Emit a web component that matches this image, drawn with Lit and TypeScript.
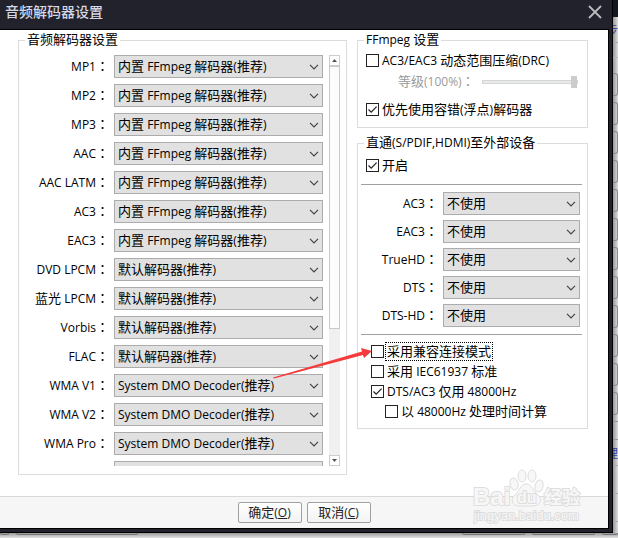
import { LitElement, html, css } from "lit";
import { customElement, property, state } from "lit/decorators.js";

const CJK = /([\u3000-\u9fff\uff00-\uffef]+)/;

/* Han runs are set one size larger than the Latin text beside them. */
const mixed = (text: string) =>
  text.split(CJK).map((part) => (CJK.test(part) ? html`<span class="han">${part}</span>` : part));

const shared = css`
  * { box-sizing: border-box; }
  .han { font-size: 13px; line-height: 0; }
  /* The Traditional face centres the full-width colon in its cell. */
  .colon { font-family: "Noto Sans CJK TC", sans-serif; font-size: 13px; line-height: 0; }
`;

@customElement("option-select")
class OptionSelect extends LitElement {
  @property() value = "";
  @property() name = "";
  @property({ type: Array }) options: string[] = [];

  static styles = [
    shared,
    css`
      :host { display: block; min-width: 0; }
      select, select::picker(select) { appearance: base-select; }
      select {
        display: flex;
        align-items: center;
        width: 100%;
        height: 23px;
        min-height: 0;
        padding: 0 3px;
        border: 1px solid #acacac;
        border-radius: 0;
        background: #e1e1e1;
        color: #000;
        font: inherit;
      }
      select::picker-icon { display: none; }
      select button {
        all: unset;
        display: flex;
        flex: 1;
        align-items: center;
        justify-content: space-between;
        line-height: 21px;
        white-space: pre;
      }
      svg { width: 10px; height: 6px; flex: none; }
    `,
  ];

  render() {
    return html`<select aria-label=${this.name} @change=${(e: Event) => (this.value = (e.target as HTMLSelectElement).value)}>
      <button><span>${mixed(this.value)}</span><svg viewBox="0 0 10 6"><path d="M1 .8 5 4.8 9 .8" fill="none" stroke="#444" stroke-width="1.2"/></svg></button>
      ${this.options.map((o) => html`<option value=${o} ?selected=${o === this.value}>${o}</option>`)}
    </select>`;
  }
}

@customElement("check-box")
class CheckBox extends LitElement {
  @property() text = "";
  @property({ type: Boolean }) checked = false;
  @property({ type: Boolean }) focused = false;

  static styles = [
    shared,
    css`
      :host { display: flex; }
      label { display: flex; align-items: center; gap: 2px; line-height: 17px; white-space: pre; }
      input {
        appearance: none;
        flex: none;
        width: 13px;
        height: 13px;
        margin: 0;
        border: 1px solid #222;
        background: #fff;
      }
      input:checked {
        background: #fff url("data:image/svg+xml,%3Csvg xmlns='http://www.w3.org/2000/svg' viewBox='0 0 11 11'%3E%3Cpath d='M1.5 5.5 4.2 8.2 9.6 2.6' fill='none' stroke='%23222' stroke-width='1.2'/%3E%3C/svg%3E");
      }
      .text { padding: 0 1px; }
      .focused { outline: 1px dotted #000; outline-offset: 0; }
    `,
  ];

  render() {
    return html`<label><input type="checkbox" .checked=${this.checked}><span class="text ${this.focused ? "focused" : ""}">${mixed(this.text)}</span></label>`;
  }
}

const FF = "内置 FFmpeg 解码器(推荐)";
const DEF = "默认解码器(推荐)";
const DMO = "System DMO Decoder(推荐)";

const DECODERS: [string, string][] = [
  ["MP1", FF], ["MP2", FF], ["MP3", FF], ["AAC", FF], ["AAC LATM", FF], ["AC3", FF], ["EAC3", FF],
  ["DVD LPCM", DEF], ["蓝光 LPCM", DEF], ["Vorbis", DEF], ["FLAC", DEF],
  ["WMA V1", DMO], ["WMA V2", DMO], ["WMA Pro", DMO], ["", ""],
];

const OUTPUTS = ["AC3", "EAC3", "TrueHD", "DTS", "DTS-HD"];

const colon = html`<span class="colon">：</span>`;

@customElement("app-root")
class AppRoot extends LitElement {
  @state() level = 100;

  static styles = [
    shared,
    css`
      :host {
        display: grid;
        grid-template-columns: minmax(0, 1fr) 5px;
        grid-template-rows: 1fr 5px;
        min-height: 100vh;
        overflow: hidden;
        background: #c9c9c9;
        color: #000;
        font: 12px/18px "Open Sans", "Noto Sans CJK SC", sans-serif;
      }
      .dialog {
        position: relative;
        display: flex;
        flex-direction: column;
        background: #22222c;
        border-right: 1px solid #000;
        border-bottom: 1px solid #000;
        padding: 0 3px 3px 0;
      }
      header {
        display: flex;
        align-items: center;
        justify-content: space-between;
        height: 29px;
        padding: 0 7px 5px 5px;
        flex: none;
      }
      h1 { margin: 0; font-size: 14px; line-height: 20px; font-weight: 500; color: #d4d8e4; }
      .close { all: unset; display: flex; }
      .close svg { width: 14px; height: 14px; }
      .body {
        flex: 1;
        display: flex;
        flex-direction: column;
        background: #fff;
        border: solid #000;
        border-width: 1px 1px 1px 0;
      }
      main {
        flex: 1;
        display: grid;
        grid-template-columns: minmax(0, 329fr) minmax(0, 231fr);
        gap: 10px;
        align-items: start;
        padding: 1px 20px 21px 18px;
      }
      fieldset { margin: 0; min-width: 0; border: 1px solid #dcdcdc; padding: 0; }
      legend { margin-left: 6px; padding: 0 2px; line-height: 18px; }
      .right { display: grid; gap: 6px; }
      .scroll { display: grid; grid-template-columns: minmax(0, 1fr) 11px; gap: 6px; height: 411px; margin: 6px 6px 8px 0; }
      .rows { display: grid; grid-auto-rows: 23px; gap: 6px; overflow: hidden; }
      .row { display: grid; grid-template-columns: 90px minmax(0, 1fr); gap: 5px; align-items: center; }
      .label { text-align: right; white-space: pre; }
      .bar { display: flex; flex-direction: column; background: #f0f0f0; }
      .bar button { all: unset; display: grid; place-items: center; height: 11px; box-sizing: border-box; border: 1px solid #cdcdcd; background: #fff; }
      .bar svg { width: 5px; height: 3px; }
      .thumb { height: 263px; border: 1px solid #c9c9c9; background: #fcfcfc; }
      .fill { flex: 1; }
      .ff { padding: 3px 9px 9px 8px; }
      .drc { display: flex; align-items: center; justify-content: space-between; margin: 4px 0 10px; padding-left: 32px; color: #9b9b9b; }
      input[type="range"] { appearance: none; width: 96px; height: 13px; margin: 0; background: none; }
      input[type="range"]::-webkit-slider-runnable-track { height: 4px; background: #e7eaea; border: 1px solid #d6d6d6; }
      input[type="range"]::-webkit-slider-thumb { appearance: none; width: 6px; height: 12px; margin-top: -5px; background: #ccc; }
      .pass { padding: 5px 5px 8px 3px; }
      .on { margin: 0 0 10px 5px; }
      hr { margin: 0; border: 0; border-top: 1px solid #a0a0a0; }
      .outs { display: grid; gap: 5px; padding: 7px 2px 7px 0; }
      .outs .row { grid-template-columns: 77px minmax(0, 1fr); }
      .opts { display: grid; gap: 3px; padding: 8px 0 0 10px; }
      .sub { margin-left: 14px; }
      footer {
        display: flex;
        justify-content: center;
        gap: 5px;
        padding: 5px 0;
        border-top: 1px solid #d9d9d9;
        background: #f6f6f6;
      }
      footer button {
        width: 64px;
        height: 21px;
        padding: 0;
        border: 1px solid #a0a0a0;
        border-radius: 2px;
        background: linear-gradient(#fff, #f3f3f3);
        color: #222;
        font: inherit;
        line-height: 18px;
      }
      .side { overflow: hidden; background: linear-gradient(90deg, #999, #ddd); }
      .dark { height: 17px; background: #15171f; }
      .glyph { height: 26px; padding-top: 5px; color: #3c3c9c; border-bottom: 1px solid #aaa; overflow: hidden; direction: rtl; }
      .line { height: 15px; border-bottom: 1px solid #bbb; margin-bottom: 15px; }
      .slot { height: 23px; margin-bottom: 6px; border: 1px solid #8a8a8a; border-left: 0; border-radius: 0 3px 3px 0; }
      .tail { height: 19px; border: solid #999; border-width: 1px 0; }
      .tall { height: 28px; border-bottom: 1px solid #aaa; }
      .under {
        grid-column: 1 / -1;
        display: grid;
        grid-template-columns: 9px 122px 1fr 63px 63px 16px;
        gap: 7px;
        background: linear-gradient(#999, #e2e2e2);
      }
      .under span { height: 2px; border: 1px solid #777; border-top: 0; border-radius: 0 0 3px 3px; }
      .under .none { border: 0; }
      .over { position: absolute; pointer-events: none; }
      .arrow { left: 273px; top: 342px; width: 100px; height: 38px; }
      .mark { right: 19px; bottom: 4px; width: 120px; height: 62px; }
    `,
  ];

  render() {
    return html`
      <section class="dialog">
        <header>
          <h1>音频解码器设置</h1>
          <button class="close" aria-label="关闭"><svg viewBox="0 0 14 14"><path d="M1 1 13 13M13 1 1 13" stroke="#bbb" stroke-width="1.8"/></svg></button>
        </header>
        <div class="body">
          <main>
            <fieldset>
              <legend>${mixed("音频解码器设置")}</legend>
              <div class="scroll">
                <div class="rows">
                  ${DECODERS.map(([name, value]) => html`<div class="row">
                    <span class="label">${name ? html`${mixed(name)}${colon}` : ""}</span>
                    <option-select .name=${name} .value=${value} .options=${[FF, DEF, DMO]}></option-select>
                  </div>`)}
                </div>
                <div class="bar">
                  <button aria-label="上"><svg viewBox="0 0 5 3"><path d="M0 3 2.5 0 5 3z" fill="#555"/></svg></button>
                  <div class="thumb"></div>
                  <div class="fill"></div>
                  <button aria-label="下"><svg viewBox="0 0 5 3"><path d="M0 0 2.5 3 5 0z" fill="#555"/></svg></button>
                </div>
              </div>
            </fieldset>
            <div class="right">
              <fieldset>
                <legend>${mixed("FFmpeg 设置")}</legend>
                <div class="ff">
                  <check-box text="AC3/EAC3 动态范围压缩(DRC)"></check-box>
                  <div class="drc">
                    <label for="level">${mixed(`等级(${this.level}%)`)}${colon}</label>
                    <input id="level" type="range" .value=${String(this.level)} disabled>
                  </div>
                  <check-box text="优先使用容错(浮点)解码器" checked></check-box>
                </div>
              </fieldset>
              <fieldset>
                <legend>${mixed("直通(S/PDIF,HDMI)至外部设备")}</legend>
                <div class="pass">
                  <check-box class="on" text="开启" checked></check-box>
                  <hr>
                  <div class="outs">
                    ${OUTPUTS.map((name) => html`<div class="row">
                      <span class="label">${name}${colon}</span>
                      <option-select .name=${name} .value=${"不使用"} .options=${["不使用"]}></option-select>
                    </div>`)}
                  </div>
                  <hr>
                  <div class="opts">
                    <check-box text="采用兼容连接模式" focused></check-box>
                    <check-box text="采用 IEC61937 标准"></check-box>
                    <check-box text="DTS/AC3 仅用 48000Hz" checked></check-box>
                    <check-box class="sub" text="以 48000Hz 处理时间计算"></check-box>
                  </div>
                </div>
              </fieldset>
            </div>
          </main>
          <footer>
            <button>${mixed("确定(")}<u>O</u>)</button>
            <button>${mixed("取消(")}<u>C</u>)</button>
          </footer>
        </div>
        <svg class="over mark" viewBox="0 0 120 62">
          <g fill="#f7f7f7" stroke="#dedede" stroke-width="1">
            <ellipse cx="41" cy="18" rx="4" ry="6" transform="rotate(-15 41 18)"/>
            <ellipse cx="49" cy="10" rx="4" ry="6"/>
            <ellipse cx="59" cy="10" rx="4" ry="6"/>
            <ellipse cx="66" cy="20" rx="4" ry="6" transform="rotate(15 66 20)"/>
            <path d="M53 18c6 0 7 7 12 11 5 4 2 11-5 11H46c-7 0-9-7-4-11 5-4 5-11 11-11z"/>
            <g paint-order="stroke" stroke-width="2" font-family="Liberation Sans, sans-serif" font-weight="700">
              <text x="0" y="39" font-size="24">Bai</text>
              <text x="44" y="37" font-size="16">du</text>
              <text x="71" y="38" font-size="18" font-family="Noto Sans CJK SC, sans-serif">经验</text>
              <text x="1" y="54" font-size="13" font-weight="400">jingyan.baidu.com</text>
            </g>
          </g>
        </svg>
        <svg class="over arrow" viewBox="0 0 100 38"><path d="M0 35.500 89 9.500 88 6 99 9 91 16 90 13 1 36.500z" fill="#f53b3b"/></svg>
      </section>
      <div class="side" aria-hidden="true">
        <div class="dark"></div><div class="glyph">步</div><div class="line"></div>
        ${Array.from({ length: 12 }, () => html`<div class="slot"></div>`)}
        <div class="tail"></div><div class="glyph">理</div><div class="tall"></div><div class="tall"></div>
      </div>
      <div class="under" aria-hidden="true"><span></span><span></span><span class="none"></span><span></span><span></span><span></span></div>
    `;
  }
}
